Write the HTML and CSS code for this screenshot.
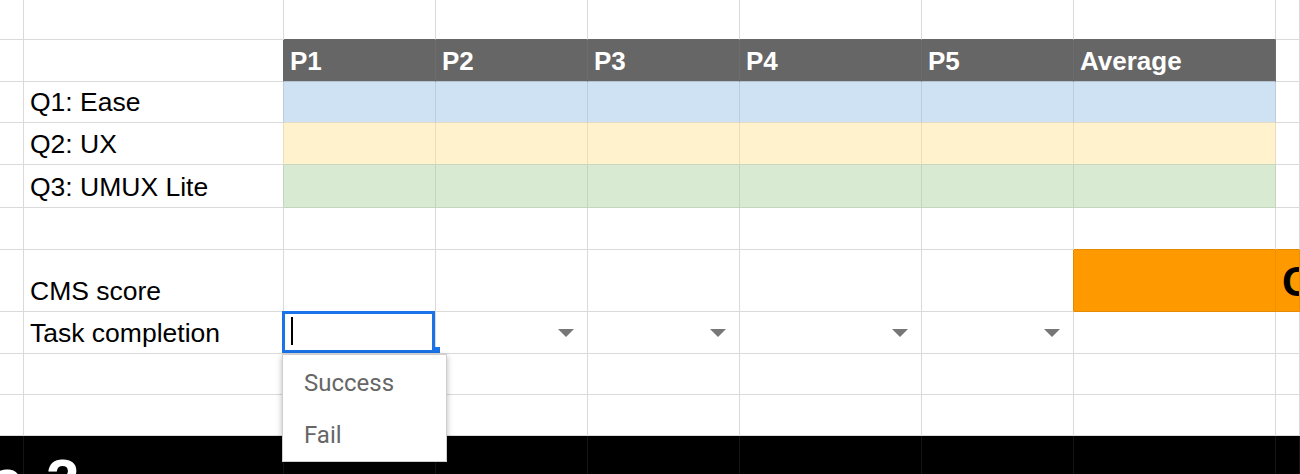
FILE: index.html
```html
<!DOCTYPE html>
<html lang="en">
<head>
  <meta charset="UTF-8" />
  <title>Survey scores</title>
  <link rel="stylesheet" href="styles.css">
</head>
<body>
  <div class="sheet">
    <div class="row r1">
      <div class="c"></div><div class="c"></div>
      <div class="c on-hd"></div><div class="c on-hd"></div><div class="c on-hd"></div>
      <div class="c on-hd"></div><div class="c on-hd"></div><div class="c on-hd"></div>
      <div class="c"></div>
    </div>

    <div class="row r2">
      <div class="c"></div><div class="c edge-hd"></div>
      <div class="c hd">P1</div><div class="c hd">P2</div><div class="c hd">P3</div>
      <div class="c hd">P4</div><div class="c hd">P5</div><div class="c hd">Average</div>
      <div class="c"></div>
    </div>

    <div class="row r3">
      <div class="c"></div><div class="c label edge-blue">Q1: Ease</div>
      <div class="c blue"></div><div class="c blue"></div><div class="c blue"></div>
      <div class="c blue"></div><div class="c blue"></div><div class="c blue"></div>
      <div class="c"></div>
    </div>

    <div class="row r4">
      <div class="c"></div><div class="c label edge-yellow">Q2: UX</div>
      <div class="c yellow"></div><div class="c yellow"></div><div class="c yellow"></div>
      <div class="c yellow"></div><div class="c yellow"></div><div class="c yellow"></div>
      <div class="c"></div>
    </div>

    <div class="row r5">
      <div class="c"></div><div class="c label edge-green">Q3: UMUX Lite</div>
      <div class="c green"></div><div class="c green"></div><div class="c green"></div>
      <div class="c green"></div><div class="c green"></div><div class="c green"></div>
      <div class="c"></div>
    </div>

    <div class="row r6">
      <div class="c"></div><div class="c"></div>
      <div class="c"></div><div class="c"></div><div class="c"></div>
      <div class="c"></div><div class="c"></div><div class="c on-orange"></div>
      <div class="c on-orange"></div>
    </div>

    <div class="row r7">
      <div class="c"></div><div class="c label">CMS score</div>
      <div class="c"></div><div class="c"></div><div class="c"></div>
      <div class="c"></div><div class="c edge-orange"></div><div class="c orange"></div>
      <div class="c orange score">C</div>
    </div>

    <div class="row r8">
      <div class="c"></div><div class="c label">Task completion</div>
      <div class="c editing">
        <span class="caret"></span>
        <span class="handle"></span>
        <div class="menu">
          <div class="menu-item">Success</div>
          <div class="menu-item">Fail</div>
        </div>
      </div>
      <div class="c drop"><span class="arrow"></span></div>
      <div class="c drop"><span class="arrow"></span></div>
      <div class="c drop"><span class="arrow"></span></div>
      <div class="c drop"><span class="arrow"></span></div>
      <div class="c"></div>
      <div class="c"></div>
    </div>

    <div class="row r9">
      <div class="c"></div><div class="c"></div>
      <div class="c"></div><div class="c"></div><div class="c"></div>
      <div class="c"></div><div class="c"></div><div class="c"></div>
      <div class="c"></div>
    </div>

    <div class="row r10">
      <div class="c"></div><div class="c"></div>
      <div class="c"></div><div class="c"></div><div class="c"></div>
      <div class="c"></div><div class="c"></div><div class="c"></div>
      <div class="c"></div>
    </div>

    <div class="row banner">
      <div class="c banner-text">e 2</div><div class="c"></div>
      <div class="c"></div><div class="c"></div><div class="c"></div>
      <div class="c"></div><div class="c"></div><div class="c"></div>
      <div class="c"></div>
    </div>
  </div>
</body>
</html>
```

FILE: styles.css
```css
:root {
  --grid: #dadada;
  --header: #666666;
  --blue: #cfe2f3;
  --yellow: #fff2cc;
  --green: #d9ead3;
  --orange: #ff9900;
  --select: #1a73e8;
}

body {
  margin: 0;
  overflow: hidden;
  background: #fff;
  font-family: "Liberation Sans", Arial, sans-serif;
  color: #000;
}

.sheet {
  width: 1300px;
  height: 474px;
  overflow: hidden;
}

.row {
  display: grid;
  grid-template-columns: 24px 260px 152px 152px 152px 182px 152px 202px 1fr;
}

.r1 { height: 40px; }
.r2 { height: 42px; }
.r3 { height: 41px; }
.r4 { height: 42px; }
.r5 { height: 43px; }
.r6 { height: 42px; }
.r7 { height: 62px; }
.r8 { height: 42px; }
.r9 { height: 41px; }
.r10 { height: 41px; }
.banner { height: 38px; }

.c {
  box-sizing: border-box;
  border-right: 1px solid var(--grid);
  border-bottom: 1px solid var(--grid);
  min-width: 0;
  white-space: nowrap;
  font-size: 26.5px;
  line-height: 30px;
  display: flex;
  align-items: flex-end;
  padding: 0 6px 5px;
}

/* header row */
.hd {
  background: var(--header);
  color: #fff;
  font-weight: bold;
  font-size: 26px;
  border-right-color: #6c6c6c;
  border-bottom-color: #b4c3d2;
}
.on-hd { border-bottom-color: var(--header); }
.edge-hd { border-right-color: var(--header); }

/* score bands */
.blue {
  background: var(--blue);
  border-right-color: #bccddd;
  border-bottom-color: #e3dcc2;
}
.edge-blue { border-right-color: #bccddd; }

.yellow {
  background: var(--yellow);
  border-right-color: #e8ddbc;
  border-bottom-color: #c8d6bf;
}
.edge-yellow { border-right-color: #e8ddbc; }

.green {
  background: var(--green);
  border-right-color: #c4d5be;
  border-bottom-color: #c4d5be;
}
.edge-green { border-right-color: #c4d5be; }

/* CMS score */
.orange {
  background: var(--orange);
  border-right-color: #f29100;
  border-bottom-color: #e68a00;
}
.on-orange { border-bottom-color: #e68a00; }
.edge-orange { border-right-color: #e68a00; }

.score {
  font-weight: bold;
  font-size: 42px;
  line-height: 42px;
  padding-bottom: 8px;
  overflow: hidden;
}

/* task completion dropdowns */
.drop {
  align-items: center;
  justify-content: flex-end;
  padding: 0 13px 0 0;
}

.arrow {
  width: 0;
  height: 0;
  border-left: 8px solid transparent;
  border-right: 8px solid transparent;
  border-top: 8px solid #777;
}

.editing {
  position: relative;
}

.editing::before {
  content: "";
  position: absolute;
  top: -1px;
  left: -2px;
  right: 0;
  bottom: 0;
  border: 3px solid var(--select);
}

.caret {
  position: absolute;
  left: 7px;
  top: 5px;
  width: 2px;
  height: 28px;
  background: #000;
}

.handle {
  position: absolute;
  right: -5px;
  bottom: 0;
  width: 6px;
  height: 6px;
  background: var(--select);
}

.menu {
  position: absolute;
  top: 42px;
  left: -2px;
  width: 165px;
  box-sizing: border-box;
  padding-top: 2px;
  background: #fff;
  border: 1px solid #cfcfcf;
  box-shadow: 0 2px 6px rgba(0, 0, 0, 0.28);
  z-index: 2;
}

.menu-item {
  height: 52px;
  line-height: 52px;
  padding-left: 21px;
  font-family: Roboto, "Liberation Sans", sans-serif;
  font-size: 24px;
  color: #666;
}

/* black banner below the sheet */
.banner .c {
  background: #000;
  border-color: #141414;
}

.banner-text {
  position: relative;
  z-index: 1;
  color: #fff;
  font-weight: bold;
  font-size: 60px;
  line-height: 60px;
  align-items: flex-start;
  padding: 15px 0 0;
  margin-left: -10px;
  word-spacing: 6px;
}
```
